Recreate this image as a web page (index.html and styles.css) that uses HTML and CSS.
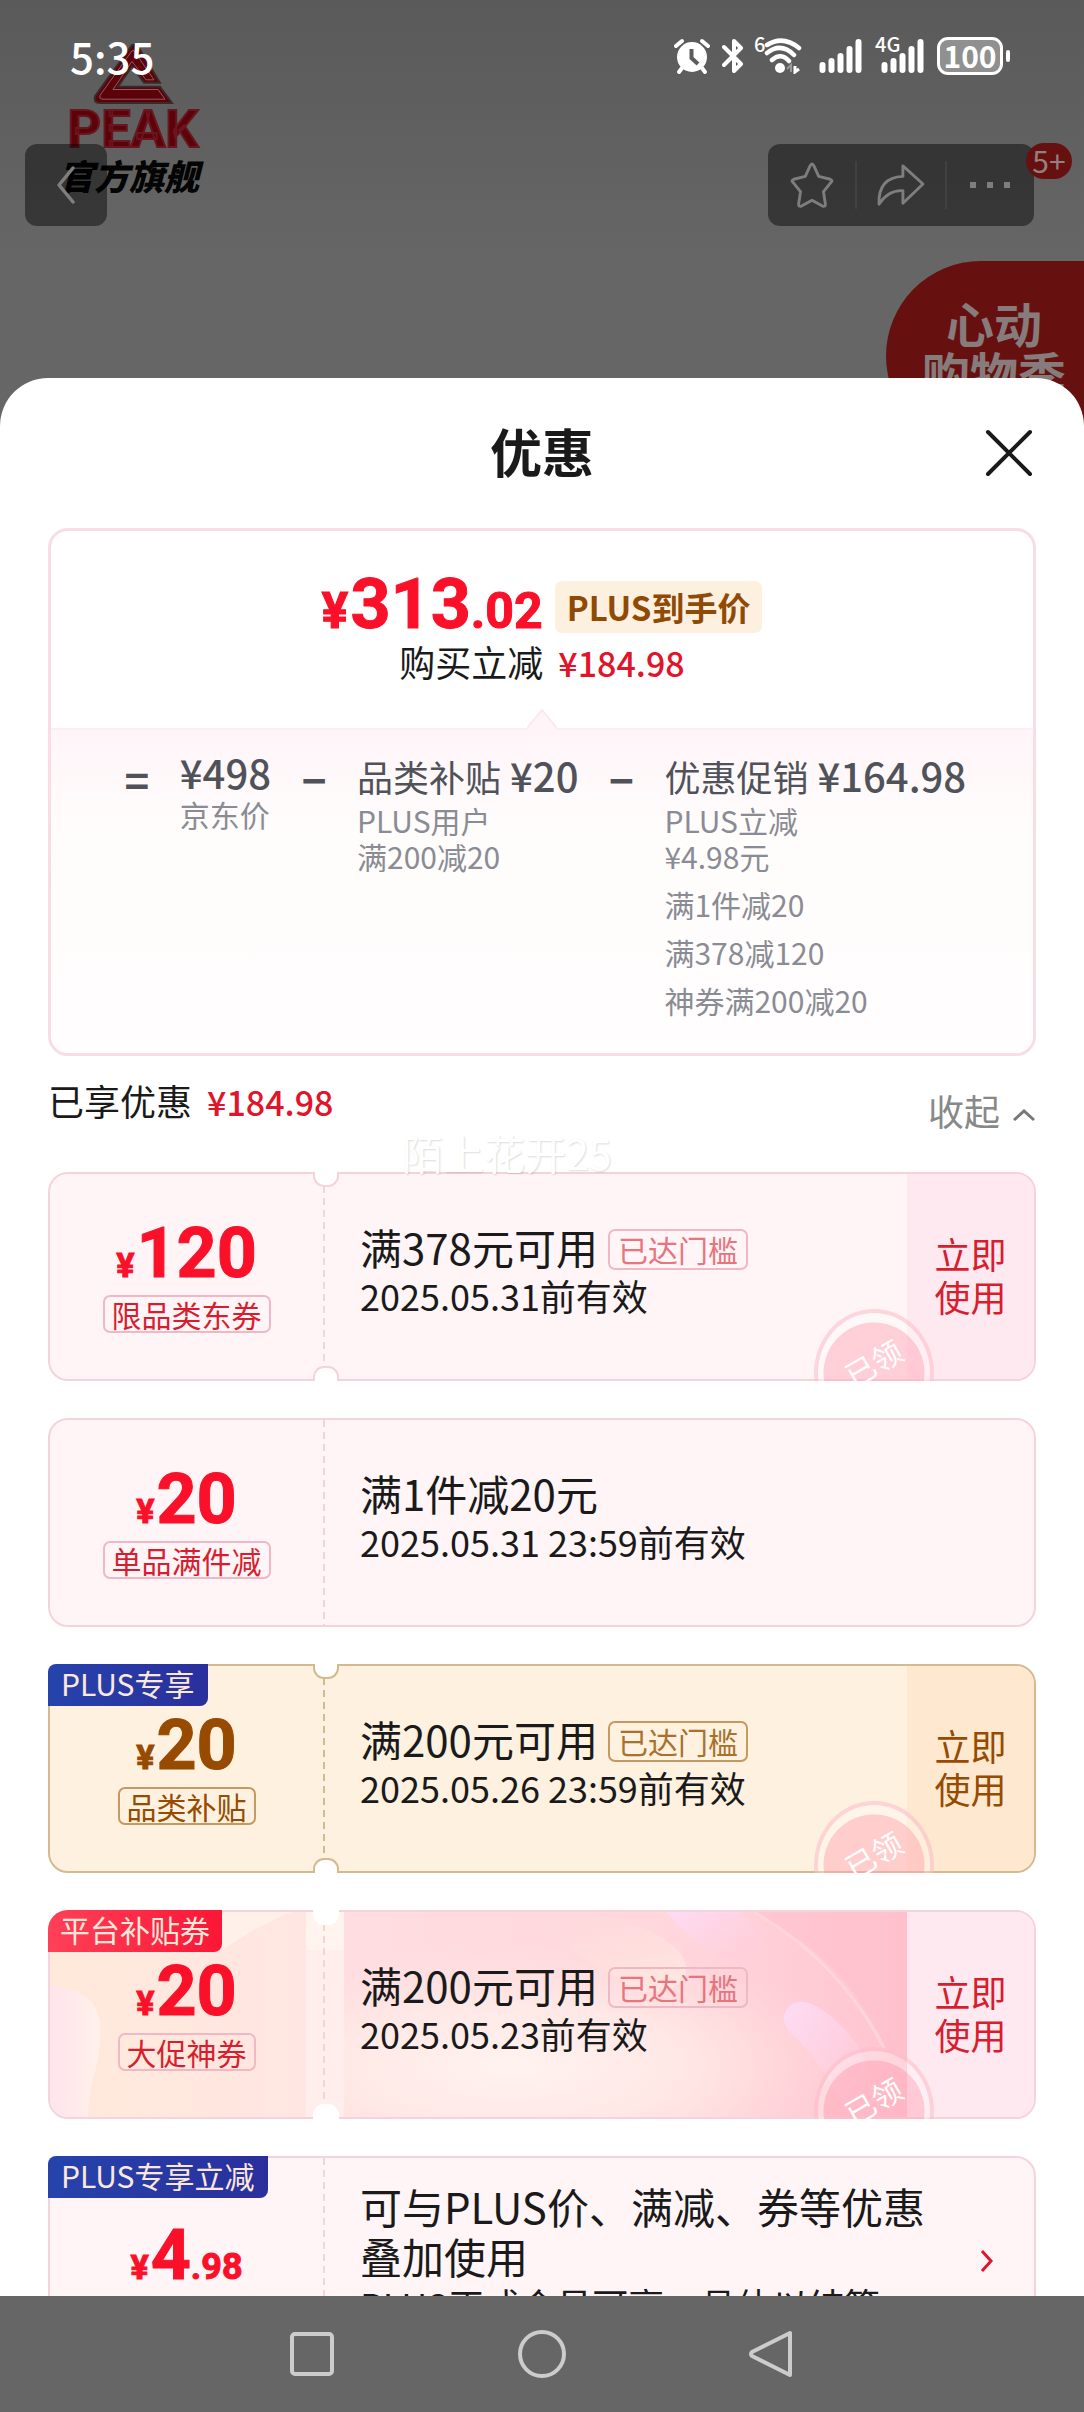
FILE: index.html
```html
<!DOCTYPE html>
<html lang="zh-CN">
<head>
<meta charset="utf-8">
<meta name="viewport" content="width=device-width, initial-scale=1">
<title>优惠</title>
<link rel="stylesheet" href="styles.css">
</head>
<body>
<div class="app">
  <div class="scene" aria-hidden="true">
    <div class="brand">
      <svg class="brand-mark" width="82" height="62" viewBox="0 0 82 64" preserveAspectRatio="none">
        <path d="M40 2 L3 55 Q1 62 8 62 H80 L68 45 H26 L40 24 L52 41 H68 L45 2 Z" fill="#5c0208" stroke="#3a2a2b" stroke-width="2"/>
        <path d="M40 8 L8 54 Q7 58 11 58 H73 L66 48 H21 L40 19 L54 38 H62 L42 8 Z" fill="none" stroke="#8a6063" stroke-width="1"/>
      </svg>
      <span class="brand-name">PEAK</span>
      <span class="brand-sub">官方旗舰</span>
    </div>
    <div class="promo"><span>心动</span><span>购物季</span></div>
  </div>

  <header class="top">
    <div class="status">
      <span class="time">5:35</span>
      <div class="status-icons">
        <svg width="36" height="36" viewBox="0 0 36 36"><circle cx="18" cy="19" r="15" fill="#fff"/><path d="M2 8 L8 3 M34 8 L28 3 M8 30 L5 34 M28 30 L31 34" stroke="#fff" stroke-width="4" stroke-linecap="round"/><path d="M17.500 11 V20 L24 26" fill="none" stroke="#5c5c5c" stroke-width="4"/></svg>
        <svg class="bt" width="22" height="36" viewBox="0 0 22 36"><path d="M2 9 L19 26 L12 33 V3 L19 10 L2 27" fill="none" stroke="#fff" stroke-width="4" stroke-linejoin="round" stroke-linecap="round"/></svg>
        <span class="wifi"><i class="gen">6</i>
        <svg width="38" height="36" viewBox="0 0 38 36"><path d="M3 7 Q19 -3 35 10 M3 15 Q17 4 30 17 M8 22 Q17 14 25 23" fill="none" stroke="#fff" stroke-width="4.500" stroke-linecap="round"/><circle cx="16" cy="30" r="5" fill="#fff"/><path d="M27 34 V27 L23 31" fill="none" stroke="#999" stroke-width="2"/><path d="M31 28 V34 L35 31" fill="none" stroke="#fff" stroke-width="3"/></svg></span>
        <svg class="signal" width="44" height="36" viewBox="0 0 44 36"><path d="M3.500 27 V32 M12.500 23 V32 M21.500 18 V32 M30.500 11 V32 M39.500 4 V32" stroke="#fff" stroke-width="6" stroke-linecap="round"/></svg>
        <span class="cell"><i class="gen">4G</i>
        <svg width="44" height="36" viewBox="0 0 44 36"><path d="M3.500 27 V32 M12.500 23 V32 M21.500 18 V32 M30.500 11 V32 M39.500 4 V32" stroke="#fff" stroke-width="6" stroke-linecap="round"/></svg></span>
        <span class="battery">100</span>
      </div>
    </div>
    <div class="toolbar">
      <button class="back" type="button" aria-label="返回">
        <svg width="20" height="38" viewBox="0 0 20 38"><path d="M17 2 L3 19 L17 36" fill="none" stroke="#7e7e7e" stroke-width="3.500" stroke-linecap="round" stroke-linejoin="round"/></svg>
      </button>
      <div class="tools">
        <button type="button" aria-label="收藏"><svg width="46" height="46" viewBox="0 0 46 48"><path d="M23 2 Q24 2 25 4 L30 15 L42 18 Q45 19 43 21 L35 31 L37 44 Q37 47 34 46 L23 40 L12 46 Q9 47 9 44 L11 31 L3 21 Q1 19 4 18 L16 15 L21 4 Q22 2 23 2 Z" fill="none" stroke="#7e7e7e" stroke-width="3" stroke-linejoin="round"/></svg></button>
        <button type="button" aria-label="分享"><svg width="50" height="44" viewBox="0 0 50 46"><path d="M27 3 L48 22 L27 42 V29 Q12 28 2 43 Q1 15 27 14 Z" fill="none" stroke="#7e7e7e" stroke-width="3" stroke-linejoin="round"/></svg></button>
        <button type="button" aria-label="更多"><svg width="42" height="8" viewBox="0 0 42 8"><path d="M1 1h6v6h-6z M18 1h6v6h-6z M35 1h6v6h-6z" fill="#7e7e7e"/></svg></button>
        <span class="count">5+</span>
      </div>
    </div>
  </header>

  <main class="sheet">
    <div class="sheet-head">
      <h1>优惠</h1>
      <button class="close" type="button" aria-label="关闭"><svg width="48" height="48" viewBox="0 0 48 48"><path d="M3 3 L45 45 M45 3 L3 45" stroke="#1a1a1a" stroke-width="4" stroke-linecap="round"/></svg></button>
    </div>

    <section class="summary">
      <div class="final">
        <div class="final-row">
          <span class="price big"><i>¥</i>313<b>.02</b></span>
          <span class="plus-badge">PLUS到手价</span>
        </div>
        <p class="saved">购买立减<strong>¥184.98</strong></p>
      </div>
      <div class="calc">
        <svg class="pointer" width="30" height="22" viewBox="0 0 30 22"><path d="M0 22 L15 2 L30 22 Z" fill="#fff5f8"/><path d="M0 20 L15 2 L30 20" fill="none" stroke="#fbe9ef" stroke-width="2"/></svg>
        <span class="op">=</span>
        <div class="term origin"><div class="head"><strong>¥498</strong></div><p>京东价</p></div>
        <span class="op">−</span>
        <div class="term"><div class="head">品类补贴<strong>¥20</strong></div><p>PLUS用户<br>满200减20</p></div>
        <span class="op">−</span>
        <div class="term"><div class="head">优惠促销<strong>¥164.98</strong></div><p>PLUS立减<br>¥4.98元</p><p>满1件减20</p><p>满378减120</p><p>神券满200减20</p></div>
      </div>
    </section>

    <div class="enjoyed">
      <span>已享优惠<strong>¥184.98</strong></span>
      <button class="fold" type="button">收起<svg width="24" height="14" viewBox="0 0 24 14"><path d="M2 12 L12 3 L22 12" fill="none" stroke="#777" stroke-width="3"/></svg></button>
      <span class="watermark">陌上花开25</span>
    </div>

    <div class="coupons">
      <article class="coupon notched">
        <div class="stub"><span class="price"><i>¥</i>120</span><span class="kind">限品类东券</span></div>
        <div class="info"><h2>满378元可用<span class="met">已达门槛</span></h2><p>2025.05.31前有效</p></div>
        <button class="use" type="button">立即<br>使用</button>
        <div class="seal"><span>已领</span></div>
      </article>

      <article class="coupon">
        <div class="stub"><span class="price"><i>¥</i>20</span><span class="kind">单品满件减</span></div>
        <div class="info"><h2>满1件减20元</h2><p>2025.05.31 23:59前有效</p></div>
      </article>

      <article class="coupon notched gold">
        <span class="ribbon">PLUS专享</span>
        <div class="stub"><span class="price"><i>¥</i>20</span><span class="kind">品类补贴</span></div>
        <div class="info"><h2>满200元可用<span class="met">已达门槛</span></h2><p>2025.05.26 23:59前有效</p></div>
        <button class="use" type="button">立即<br>使用</button>
        <div class="seal"><span>已领</span></div>
      </article>

      <article class="coupon notched festive">
        <svg class="art" viewBox="0 0 984 205" preserveAspectRatio="none">
          <defs>
            <linearGradient id="peach" x1="0" y1="0" x2="1" y2="0"><stop offset="0" stop-color="#ffe9da"/><stop offset=".25" stop-color="#ffe6e2"/><stop offset="1" stop-color="#ffe9e6"/></linearGradient>
            <linearGradient id="petal" x1="0" y1="0" x2="1" y2="0"><stop offset="0" stop-color="#ffe4ec"/><stop offset="1" stop-color="#fff1ea"/></linearGradient>
            <linearGradient id="rose" x1="0" y1="0" x2="1" y2="0"><stop offset="0" stop-color="#ffdde1"/><stop offset=".6" stop-color="#ffd6dc"/><stop offset="1" stop-color="#ffc3cf"/></linearGradient>
            <radialGradient id="glow" cx=".3" cy=".75" r=".6"><stop offset="0" stop-color="#fff3f0"/><stop offset=".5" stop-color="#ffece8" stop-opacity=".8"/><stop offset="1" stop-color="#ffe2de" stop-opacity="0"/></radialGradient>
            <linearGradient id="cream" x1="0" y1="0" x2="1" y2="1"><stop offset="0" stop-color="#ffd9d8" stop-opacity="0"/><stop offset="1" stop-color="#ffe9e2"/></linearGradient>
            <linearGradient id="lilac" x1="0" y1="0" x2="1" y2="1"><stop offset="0" stop-color="#fddcf6"/><stop offset="1" stop-color="#ffcbd8" stop-opacity=".1"/></linearGradient>
          </defs>
          <path d="M18 0 H984 V205 H18 Q0 205 0 187 V18 Q0 0 18 0 Z" fill="url(#peach)"/>
          <path d="M170 0 H242 Q210 12 172 38 Z" fill="#fff1ea"/>
          <path d="M0 74 Q45 76 50 110 Q52 140 42 170 Q38 190 38 205 H18 Q0 205 0 187 Z" fill="url(#petal)"/>
          <rect x="256" width="38" height="205" fill="#ffeeeb"/>
          <rect x="256" width="38" height="38" fill="#fff4ee"/>
          <rect x="294" width="566" height="205" fill="url(#rose)"/>
          <rect x="294" width="566" height="205" fill="url(#glow)"/>
          <path d="M460 0 H540 Q630 20 636 55 Q638 80 590 80 Z" fill="url(#cream)"/>
          <path d="M616 0 H690 Q730 30 708 56 Q670 60 616 0 Z" fill="url(#lilac)"/>
          <path d="M704 0 Q800 50 836 136 L860 160 V0 Z" fill="#ffbccb" opacity=".45"/>
          <path d="M704 0 Q790 50 834 136" fill="none" stroke="#ffd6d8" stroke-width="3"/>
          <path d="M734 104 Q740 84 762 92 Q790 106 812 140 L840 205 H800 Q778 160 748 128 Q732 114 734 104 Z" fill="url(#lilac)"/>
        </svg>
        <span class="ribbon red">平台补贴券</span>
        <div class="stub"><span class="price"><i>¥</i>20</span><span class="kind">大促神券</span></div>
        <div class="info"><h2>满200元可用<span class="met">已达门槛</span></h2><p>2025.05.23前有效</p></div>
        <button class="use" type="button">立即<br>使用</button>
        <div class="seal"><span>已领</span></div>
      </article>

      <article class="coupon">
        <span class="ribbon">PLUS专享立减</span>
        <div class="stub"><span class="price"><i>¥</i>4<b>.98</b></span></div>
        <div class="info"><h2>可与PLUS价、满减、券等优惠<br>叠加使用</h2><p>PLUS正式会员可享，具体以结算…</p></div>
        <a class="more" href="#" aria-label="查看详情"><svg width="14" height="24" viewBox="0 0 14 24"><path d="M2 2 L11 12 L2 22" fill="none" stroke="#e0142a" stroke-width="3"/></svg></a>
      </article>
    </div>
  </main>

  <nav class="nav">
    <button type="button" aria-label="最近任务"><svg width="48" height="48" viewBox="0 0 48 48"><rect x="4" y="4" width="40" height="40" rx="3" fill="none" stroke="#ccc" stroke-width="4"/></svg></button>
    <button type="button" aria-label="主屏幕"><svg width="48" height="48" viewBox="0 0 48 48"><circle cx="24" cy="24" r="22" fill="none" stroke="#ccc" stroke-width="4"/></svg></button>
    <button type="button" aria-label="返回上一页"><svg width="48" height="48" viewBox="0 0 48 48"><path d="M42 3 V45 L4 26 Q2 24 4 22 Z" fill="none" stroke="#ccc" stroke-width="4" stroke-linejoin="round"/></svg></button>
  </nav>
</div>
</body>
</html>
```
FILE: styles.css
```css
* { box-sizing: border-box; }

body {
  margin: 0;
  font-family: "Noto Sans CJK SC", sans-serif;
  color: #1a1a1a;
  background: #666;
}

h1, h2, p { margin: 0; font-weight: 400; }
i { font-style: normal; }
svg { display: block; flex: none; }

button {
  margin: 0;
  padding: 0;
  border: 0;
  background: none;
  color: inherit;
  font: inherit;
}

.app {
  position: relative;
  display: flex;
  flex-direction: column;
  height: 100vh;
  overflow: hidden;
  background: linear-gradient(#5a5a5a, #666 260px);
}

/* dimmed product page behind the sheet */
.brand {
  position: absolute;
  top: 43px;
  left: 60px;
  width: 146px;
  display: flex;
  flex-direction: column;
  align-items: center;
}
.brand-name {
  font: 700 52px/50px Roboto, sans-serif;
  color: #5c0208;
  -webkit-text-stroke: 2px #6a1620;
}
.brand-sub {
  margin-right: 8px;
  font-size: 35px;
  line-height: 40px;
  font-weight: 900;
  font-style: italic;
  white-space: nowrap;
  color: #050505;
}
.promo {
  position: absolute;
  top: 261px;
  right: 0;
  width: 198px;
  height: 190px;
  padding: 36px 0 0 18px;
  display: flex;
  flex-direction: column;
  align-items: center;
  border-radius: 95px 0 0 95px;
  background: #661110;
  color: #877c7c;
  font-size: 48px;
  line-height: 50px;
  font-weight: 700;
}

.top { position: relative; height: 378px; flex: none; }
.status {
  display: flex;
  justify-content: space-between;
  align-items: center;
  padding: 25px 81px 0 70px;
  color: #fff;
}
.time { font-size: 42px; line-height: 62px; font-weight: 500; }
.status-icons { display: flex; align-items: center; gap: 12px; }
.gen { position: absolute; top: -4px; left: 0; font-size: 20px; line-height: 20px; font-weight: 500; }
.bt { margin-right: -2px; }
.wifi { position: relative; padding-left: 10px; }
.signal { margin-left: 5px; }
.cell { position: relative; padding-left: 6px; }
.battery {
  position: relative;
  width: 66px;
  height: 38px;
  border: 3px solid #fff;
  border-radius: 11px;
  background: #909090;
  font-size: 30px;
  line-height: 31px;
  font-weight: 700;
  text-align: center;
}
.battery::after {
  content: "";
  position: absolute;
  top: 10px;
  right: -10px;
  width: 4px;
  height: 12px;
  border-radius: 2px;
  background: #fff;
}

.toolbar {
  display: flex;
  justify-content: space-between;
  padding: 57px 50px 0 25px;
}
.back, .tools { height: 82px; border-radius: 12px; background: rgba(0, 0, 0, .45); }
.back { width: 82px; display: flex; align-items: center; justify-content: center; }
.tools { position: relative; display: flex; align-items: center; width: 266px; }
.tools button {
  flex: 1;
  height: 48px;
  display: flex;
  align-items: center;
  justify-content: center;
}
.tools button + button { border-left: 2px solid #414141; }
.count {
  position: absolute;
  top: -1px;
  right: -38px;
  width: 46px;
  height: 36px;
  border-radius: 18px;
  background: #661110;
  color: #948080;
  font-size: 30px;
  line-height: 34px;
  text-align: center;
}

/* sheet */
.sheet {
  position: relative;
  flex: 1;
  min-height: 0;
  overflow: hidden;
  padding: 0 48px;
  border-radius: 48px 48px 0 0;
  background: #fff;
}
.sheet-head {
  position: relative;
  height: 150px;
  padding-bottom: 4px;
  display: flex;
  align-items: center;
  justify-content: center;
}
.sheet-head h1 { font-size: 52px; line-height: 60px; font-weight: 700; }
.close { position: absolute; top: 51px; right: 3px; }

.summary { border: 3px solid #f9dde5; border-radius: 20px; overflow: hidden; }
.final {
  height: 197px;
  padding-top: 45px;
  display: flex;
  flex-direction: column;
  align-items: center;
}
.final-row { display: flex; align-items: center; gap: 12px; height: 62px; }
.price {
  font: 700 70px/66px Roboto, sans-serif;
  color: #fa1029;
  white-space: nowrap;
  -webkit-text-stroke: 1px currentColor;
}
.price i { margin-right: 2px; font-size: 34px; }
.price b { font-size: 36px; font-weight: 700; }
.price.big i, .price.big b { font-size: 50px; }
.plus-badge {
  padding: 0 12px;
  border-radius: 7px;
  background: #fef0df;
  color: #8f4a05;
  font-size: 33px;
  line-height: 52px;
  font-weight: 700;
}
.saved { font-size: 36px; line-height: 46px; }
.saved strong, .enjoyed strong { margin-left: 15px; font-size: 34px; font-weight: 500; color: #e0142a; }

.calc {
  position: relative;
  display: flex;
  justify-content: center;
  gap: 31px;
  padding: 19px 0 35px 7px;
  border-top: 2px solid #fdeef3;
  background: linear-gradient(#fff5f8, #fffcfc 30%, #fffdfd);
}
.pointer { position: absolute; top: -22px; left: 50%; margin-left: -15px; }
.op {
  width: 24px;
  display: flex;
  justify-content: center;
  font-size: 42px;
  line-height: 60px;
  height: 60px;
  font-weight: 700;
  color: #505259;
}
.head { font-size: 36px; line-height: 52px; color: #505259; white-space: nowrap; }
.head strong { margin-left: 9px; font-size: 40px; font-weight: 500; }
.origin .head { line-height: 46px; }
.origin .head strong { margin-left: 0; }
.term p { font-size: 30px; line-height: 36px; color: #8a8c94; }
.term p + p { margin-top: 12px; }

.enjoyed {
  position: relative;
  height: 116px;
  padding-top: 18px;
  display: flex;
  justify-content: space-between;
  align-items: flex-start;
  font-size: 36px;
  line-height: 52px;
}
.fold { display: flex; align-items: center; gap: 12px; padding-top: 10px; color: #888; }
.fold svg { margin-top: 10px; }
.watermark {
  position: absolute;
  top: 70px;
  left: 354px;
  z-index: 2;
  font-size: 41px;
  color: #fff;
  text-shadow: 1px 1px 2px rgba(0, 0, 0, .14);
}

/* coupons */
.coupons { display: flex; flex-direction: column; gap: 37px; }
.coupon {
  --line: #f5d3dc;
  --accent: #d81e2e;
  --soft: #e8747f;
  --edge: #f0b8c4;
  --side: #ffe9f1;
  position: relative;
  display: flex;
  flex: none;
  min-height: 209px;
  border: 2px solid var(--line);
  border-radius: 20px;
  background: #fff5f7;
}
.gold {
  --line: #d5b98f;
  --accent: #964b00;
  --soft: #a8712f;
  --edge: #c49a62;
  --side: #fee8cf;
  background: #fef1df;
}
.stub {
  position: relative;
  width: 275px;
  flex: none;
  display: flex;
  flex-direction: column;
  align-items: center;
  justify-content: center;
  padding-right: 2px;
  background: repeating-linear-gradient(var(--line) 0 7px, transparent 7px 12px) right / 2px 100% no-repeat;
}
.gold .price { color: #964b00; }
.kind {
  margin-top: -3px;
  padding: 0 7px;
  border: 2px solid var(--edge);
  border-radius: 7px;
  font-size: 30px;
  line-height: 34px;
  color: var(--accent);
}
.info {
  position: relative;
  flex: 1;
  min-width: 0;
  display: flex;
  flex-direction: column;
  justify-content: center;
  padding: 0 0 13px 35px;
}
.info h2 { font-size: 42px; line-height: 50px; white-space: nowrap; }
.info p { font-size: 36px; line-height: 46px; white-space: nowrap; }
.met {
  display: inline-block;
  margin-left: 10px;
  padding: 0 8px;
  border: 2px solid var(--edge);
  border-radius: 7px;
  font-size: 30px;
  line-height: 37px;
  vertical-align: 3px;
  color: var(--soft);
}
.use {
  position: relative;
  width: 127px;
  padding-bottom: 3px;
  border-radius: 0 18px 18px 0;
  background: var(--side);
  color: var(--accent);
  font-size: 36px;
  line-height: 43px;
}
.more { display: flex; align-items: center; padding-right: 40px; }

/* punched half circles where the stub tears off */
.notched::before, .notched::after {
  content: "";
  position: absolute;
  left: 263px;
  z-index: 1;
  width: 22px;
  height: 13px;
  border: 2px solid var(--line);
  background: #fff;
}
.notched::before { top: -2px; border-top: 0; border-radius: 0 0 11px 11px; }
.notched::after { bottom: -2px; border-bottom: 0; border-radius: 11px 11px 0 0; }
.festive::before, .festive::after { border-color: #fff; }

.seal {
  position: absolute;
  right: 100px;
  bottom: -2px;
  width: 120px;
  height: 72px;
  overflow: hidden;
}
.seal::before {
  content: "";
  position: absolute;
  inset: 0 0 auto;
  height: 120px;
  border: 4px solid rgba(250, 160, 178, .4);
  border-radius: 50%;
  background: radial-gradient(circle, rgba(255, 170, 185, .5) 50px, rgba(255, 255, 255, .3) 51px);
}
.seal span {
  position: absolute;
  top: 31px;
  left: 29px;
  font-size: 30px;
  line-height: 44px;
  color: #fff;
  transform: rotate(-30deg);
}

.ribbon {
  position: absolute;
  top: -2px;
  left: -2px;
  z-index: 1;
  height: 42px;
  padding: 0 13px;
  border-radius: 8px 0 8px 0;
  background: linear-gradient(90deg, #2643ac, #2a2f9c);
  color: #fbe8da;
  font-size: 30px;
  line-height: 39px;
}
.ribbon.red { padding: 0 12px; border-radius: 20px 0 8px 0; background: linear-gradient(90deg, #ff4058, #fa1736); }
.art { position: absolute; inset: 0; width: 100%; height: 100%; border-radius: 18px; }

.nav {
  position: relative;
  flex: none;
  height: 116px;
  display: flex;
  align-items: center;
  justify-content: center;
  gap: 182px;
  background: #666;
}
```
